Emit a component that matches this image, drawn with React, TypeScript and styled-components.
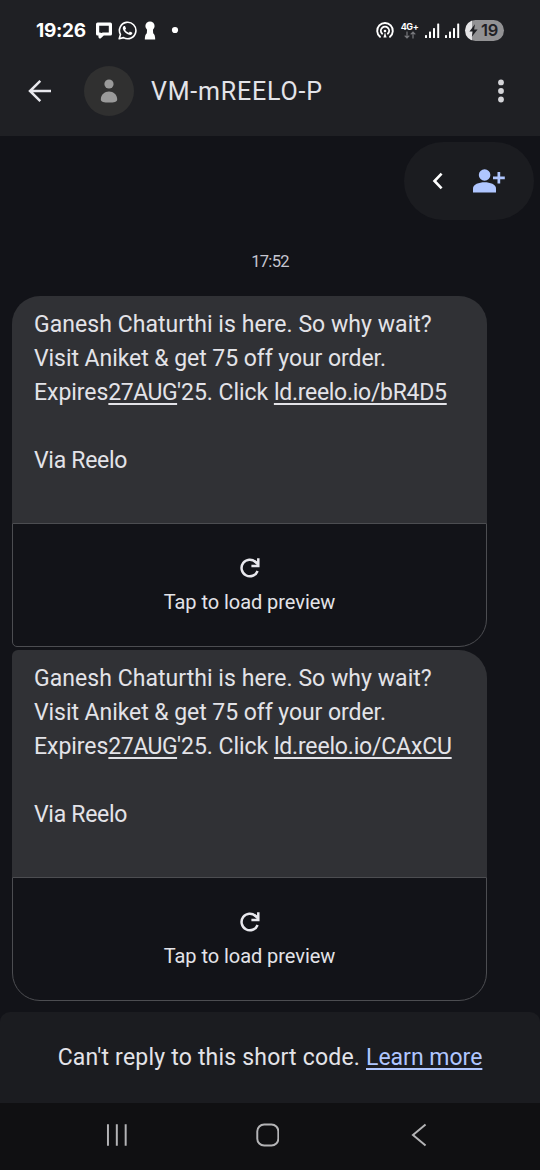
import React from "react";
import styled, { createGlobalStyle } from "styled-components";

const GlobalStyle = createGlobalStyle`
  * { box-sizing: border-box; }
  body { margin: 0; background: #121318; }
`;

const Screen = styled.div`
  width: 540px;
  height: 1170px;
  display: flex;
  flex-direction: column;
  overflow: hidden;
  background: #121318;
  color: #e3e3e8;
  font-family: Roboto, "Liberation Sans", sans-serif;
`;

const Header = styled.header`
  height: 136px;
  flex: none;
  background: #1f2024;
`;

const StatusBar = styled.div`
  height: 60px;
  padding: 0 36px;
  display: flex;
  align-items: center;
  justify-content: space-between;
  color: #fff;
`;

const StatusGroup = styled.div<{ $gap: number }>`
  display: flex;
  align-items: center;
  gap: ${(p) => p.$gap}px;
  svg { display: block; flex: none; }
`;

const Clock = styled.span`
  font: 700 19px/24px Inter, sans-serif;
  letter-spacing: -0.3px;
  width: 54px;
  padding-top: 1px;
  white-space: nowrap;
`;

const Network = styled.div`
  display: flex;
  flex-direction: column;
  align-items: center;
  width: 17px;
  margin: 0 2px 0 2px;
  font: 700 9px/9px Inter, sans-serif;
  letter-spacing: -0.4px;
`;

const Battery = styled.div`
  width: 39px;
  height: 21px;
  border-radius: 11px;
  background: linear-gradient(90deg, #e4e4e6 0 7px, #929294 7px);
  color: #1f2024;
  display: flex;
  align-items: center;
  padding-left: 4px;
  gap: 3px;
  font: 600 16.5px/21px Inter, sans-serif;
  letter-spacing: -0.3px;
`;

const TitleBar = styled.div`
  height: 62px;
  padding: 0 28px;
  display: flex;
  align-items: center;
`;

const Avatar = styled.div`
  width: 50px;
  height: 50px;
  margin: 0 17px 0 32px;
  border-radius: 50%;
  background: #303030;
  display: grid;
  place-items: center;
`;

const Title = styled.h1`
  flex: 1;
  margin: 0;
  padding-top: 1px;
  font-weight: 400;
  font-size: 25px;
  line-height: 32px;
  letter-spacing: 0.8px;
`;

const MenuButton = styled.button`
  border: 0;
  padding: 0;
  background: none;
  display: flex;
  width: 22px;
  justify-content: center;
`;

const Thread = styled.main`
  flex: 1;
  display: flex;
  flex-direction: column;
  align-items: flex-start;
`;

const ContactPill = styled.div`
  align-self: flex-end;
  width: 130px;
  height: 78px;
  margin: 6px 6px 0 0;
  border-radius: 39px;
  background: #1b1c20;
  display: flex;
  align-items: center;
  padding-left: 28px;
  gap: 28px;
`;

const Timestamp = styled.time`
  align-self: center;
  margin: 31px 0 23px;
  font-size: 16.5px;
  line-height: 22px;
  letter-spacing: -0.7px;
  color: #c6c6d0;
`;

const Message = styled.article<{ $last?: boolean }>`
  width: 475px;
  margin: 0 0 3px 12px;
  --top-left: ${(p) => (p.$last ? 6 : 28)}px;
  --bottom-left: ${(p) => (p.$last ? 28 : 5)}px;
`;

const Bubble = styled.div`
  height: 227px;
  padding: 12px 22px 0;
  background: #303135;
  border-radius: var(--top-left) 28px 0 0;
`;

const Line = styled.div<{ $spacing?: number }>`
  height: 34px;
  font-size: 23px;
  line-height: 34px;
  white-space: nowrap;
  letter-spacing: ${(p) => p.$spacing ?? 0}px;
`;

const Link = styled.a<{ $accent?: boolean; $spacing?: number }>`
  color: ${(p) => (p.$accent ? "#b0c6ff" : "inherit")};
  letter-spacing: ${(p) => p.$spacing ?? 0}px;
  text-decoration: underline;
  text-decoration-thickness: 2px;
  text-underline-offset: 3px;
  text-decoration-skip-ink: none;
`;

const Preview = styled.div`
  height: 124px;
  border: 1px solid #4c4d51;
  border-radius: 0 0 28px var(--bottom-left);
  display: flex;
  flex-direction: column;
  align-items: center;
  padding-top: 33px;
  font-size: 20px;
  line-height: 26px;
  letter-spacing: -0.05px;
  svg { display: block; margin-bottom: 10px; }
`;

const ReplyNotice = styled.footer`
  height: 91px;
  flex: none;
  border-radius: 10px 10px 0 0;
  background: #1b1c20;
  display: flex;
  align-items: center;
  justify-content: center;
  font-size: 23px;
  letter-spacing: 0.2px;
  white-space: pre;
`;

const NavBar = styled.nav`
  height: 67px;
  flex: none;
  padding: 0 113px 4px 106px;
  background: #101012;
  display: flex;
  align-items: center;
  gap: 128px;
`;

const HomeIcon = styled.svg`
  margin-right: 4px;
`;

const Reload = () => (
  <svg width="20" height="22" viewBox="0 0 20 22" fill="none" stroke="#e8e8ed" strokeWidth="2.5">
    <path d="M17.6 14A8.3 8.3 0 1 1 15.6 5L18 7.4" />
    <path d="M18.3 1.2V9H11.4" />
    <path d="M14 5L18 8V4Z" fill="#e8e8ed" stroke="none" />
  </svg>
);

const SignalBars = () => (
  <svg width="15" height="15" viewBox="0 0 15 15" fill="#fff">
    <rect x="0" y="12" width="2" height="3" rx=".6" />
    <rect x="4" y="8.5" width="2" height="6.5" rx=".6" />
    <rect x="8" y="5" width="2" height="10" rx=".6" />
    <rect x="12.2" y="0.5" width="2" height="14.5" rx=".6" />
  </svg>
);

type MessageProps = { link: string; linkSpacing: number; last?: boolean };

const ThreadMessage = ({ link, linkSpacing, last }: MessageProps) => (
  <Message $last={last}>
    <Bubble>
      <Line $spacing={0.05}>Ganesh Chaturthi is here. So why wait?</Line>
      <Line $spacing={-0.06}>Visit Aniket &amp; get 75 off your order.</Line>
      <Line $spacing={-0.04}>
        Expires<Link $spacing={-0.5}>27AUG</Link>'25. Click <Link $spacing={linkSpacing}>{link}</Link>
      </Line>
      <Line />
      <Line $spacing={-0.3}>Via Reelo</Line>
    </Bubble>
    <Preview>
      <Reload />
      Tap to load preview
    </Preview>
  </Message>
);

export default function App() {
  return (
    <Screen>
      <GlobalStyle />
      <Header>
        <StatusBar>
          <StatusGroup $gap={6}>
            <Clock>19:26</Clock>
            <svg width="16" height="17" viewBox="0 0 16 17">
              <path d="M1.6 2.2H14.4V12H7L4 14.8V12H1.6Z" fill="none" stroke="#fff" strokeWidth="3.2" strokeLinejoin="round" />
            </svg>
            <svg width="19" height="19" viewBox="0 0 24 24" fill="#fff">
              <path d="M17.5 14.4c-.3-.15-1.76-.87-2.03-.97-.27-.1-.47-.15-.67.15-.2.3-.77.97-.94 1.16-.17.2-.35.22-.64.08-.3-.15-1.26-.46-2.39-1.48-.88-.79-1.48-1.76-1.65-2.06-.17-.3-.02-.46.13-.6.13-.14.3-.35.45-.53.15-.17.2-.3.3-.5.1-.2.05-.37-.03-.52-.07-.15-.67-1.61-.91-2.21-.24-.58-.49-.5-.67-.51h-.57c-.2 0-.52.07-.79.37-.27.3-1.04 1.02-1.04 2.48s1.07 2.88 1.21 3.07c.15.2 2.1 3.2 5.08 4.49.71.3 1.26.49 1.69.62.71.23 1.36.2 1.87.12.57-.09 1.76-.72 2.01-1.41.25-.7.25-1.29.17-1.41-.07-.13-.27-.2-.57-.35" />
              <path d="M1.5 22.5L3.1 17A10.4 10.4 0 1 1 7 21Z" fill="none" stroke="#fff" strokeWidth="2" strokeLinejoin="round" />
            </svg>
            <svg width="14" height="19" viewBox="0 0 14 19" fill="#fff">
              <circle cx="7" cy="5" r="4.6" />
              <path d="M4.2 7H9.8L10.2 12.2Q12.2 13.8 12.2 18.5H1.8Q1.8 13.8 3.8 12.2Z" />
            </svg>
            <svg width="20" height="8" viewBox="0 0 20 8" fill="#fff">
              <circle cx="12" cy="4" r="3.1" />
            </svg>
          </StatusGroup>
          <StatusGroup $gap={5}>
            <svg width="18" height="17" viewBox="0 0 18 17" fill="none" stroke="#fff" strokeWidth="1.9" strokeLinecap="round">
              <path d="M4 14.8A7.8 7.8 0 1 1 14 14.8" />
              <path d="M6.1 11.7A4.1 4.1 0 1 1 11.9 11.7" />
              <circle cx="9" cy="9" r="1.3" fill="#fff" stroke="none" />
              <path d="M9 10.5L7.4 15.4H10.6Z" fill="#fff" stroke="none" />
            </svg>
            <Network>
              <span>4G+</span>
              <svg width="12" height="8" viewBox="0 0 12 8" fill="none" stroke="#77787c" strokeWidth="1.2">
                <path d="M3 .5V7M.7 4.6L3 7 5.3 4.6M9 7.5V1M6.7 3.4L9 1 11.3 3.4" />
              </svg>
            </Network>
            <SignalBars />
            <SignalBars />
            <Battery>
              <svg width="9" height="13" viewBox="0 0 9 13" fill="#1f2024">
                <path d="M6 .3L.4 7.4H3.9L2.8 12.7 8.6 5.4H5.1Z" />
              </svg>
              19
            </Battery>
          </StatusGroup>
        </StatusBar>
        <TitleBar>
          <svg width="24" height="24" viewBox="0 0 24 24" fill="none" stroke="#e8e8ed" strokeWidth="2.5">
            <path d="M23 12H2.5M12.3 1.8L2 12 12.3 22.2" />
          </svg>
          <Avatar>
            <svg width="18" height="24" viewBox="0 0 18 24" fill="#9a9a9a">
              <circle cx="9" cy="5" r="4.6" />
              <path d="M.8 20.4C.8 15.4 4.6 12.4 9 12.4S17.2 15.4 17.2 20.4C17.2 22.6 14 23.6 9 23.6S.8 22.6.8 20.4Z" />
            </svg>
          </Avatar>
          <Title>VM-mREELO-P</Title>
          <MenuButton aria-label="More">
            <svg width="6" height="24" viewBox="0 0 6 24" fill="#d4d4d8">
              <circle cx="3" cy="3.4" r="2.9" />
              <circle cx="3" cy="12" r="2.9" />
              <circle cx="3" cy="20.5" r="2.9" />
            </svg>
          </MenuButton>
        </TitleBar>
      </Header>
      <Thread>
        <ContactPill>
          <svg width="12" height="18" viewBox="0 0 12 18" fill="none" stroke="#fff" strokeWidth="2.6">
            <path d="M9.6 1.6L2.5 9 9.6 16.4" />
          </svg>
          <svg width="33" height="24" viewBox="0 0 33 24" fill="#b0c6ff">
            <circle cx="12.6" cy="6" r="5.8" />
            <path d="M1 23.4V19.4C1 15.4 7 13.3 12.6 13.3S24 15.4 24 19.4V23.4Z" />
            <path d="M25.5 3H28.2V7.6H32.8V10.2H28.2V14.6H25.5V10.2H21V7.6H25.5Z" />
          </svg>
        </ContactPill>
        <Timestamp>17:52</Timestamp>
        <ThreadMessage link="ld.reelo.io/bR4D5" linkSpacing={-0.28} />
        <ThreadMessage link="ld.reelo.io/CAxCU" linkSpacing={-0.18} last />
      </Thread>
      <ReplyNotice>
        Can't reply to this short code. <Link $accent>Learn more</Link>
      </ReplyNotice>
      <NavBar>
        <svg width="22" height="24" viewBox="0 0 22 24" stroke="#b4b4b6" strokeWidth="2">
          <path d="M2 1V23M11 1V23M20 1V23" />
        </svg>
        <HomeIcon width="24" height="24" viewBox="0 0 24 24" fill="none" stroke="#b4b4b6" strokeWidth="2">
          <rect x="1.3" y="1.3" width="21.4" height="21.4" rx="7" />
        </HomeIcon>
        <svg width="16" height="24" viewBox="0 0 16 24" fill="none" stroke="#b4b4b6" strokeWidth="2">
          <path d="M14.8 1.2L2 12 14.8 22.8" />
        </svg>
      </NavBar>
    </Screen>
  );
}
